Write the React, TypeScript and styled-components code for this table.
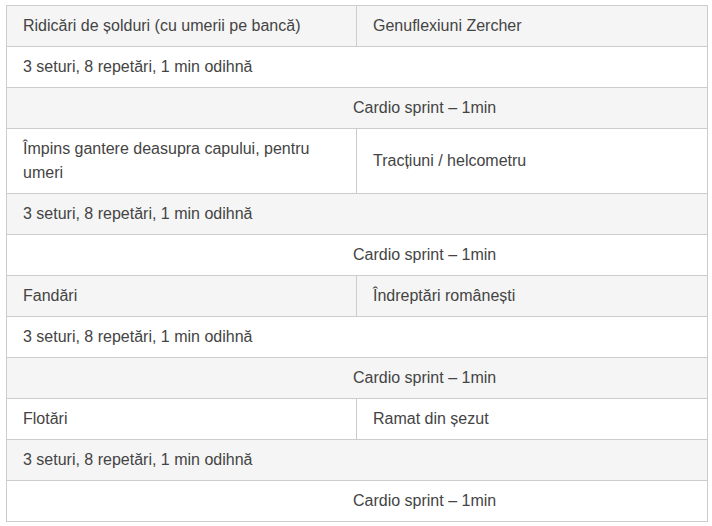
import React from "react";
import styled, { createGlobalStyle } from "styled-components";

const GlobalStyle = createGlobalStyle`
  html, body {
    margin: 0;
    padding: 0;
    background: #ffffff;
  }
  body {
    font-family: "Liberation Sans", Arial, sans-serif;
  }
`;

const Page = styled.div`
  padding: 5px 5px 0 6px;
`;

const Table = styled.table`
  width: 701px;
  border-collapse: collapse;
  table-layout: fixed;
  font-family: "Liberation Sans", Arial, sans-serif;
  font-size: 16px;
  line-height: 24px;
  color: #444444;
  border: 1px solid #cccccc;
`;

const Row = styled.tr<{ $shaded: boolean }>`
  background: ${(p) => (p.$shaded ? "#f5f5f5" : "#ffffff")};
`;

const Cell = styled.td<{ $indent?: number }>`
  border: 1px solid #cccccc;
  padding: 8px 16px 8px ${(p) => (p.$indent ?? 16)}px;
  vertical-align: middle;
  text-align: left;
`;

type Block = { left: string; right: string };

const blocks: Block[] = [
  { left: "Ridicări de șolduri (cu umerii pe bancă)", right: "Genuflexiuni Zercher" },
  { left: "Împins gantere deasupra capului, pentru umeri", right: "Tracțiuni / helcometru" },
  { left: "Fandări", right: "Îndreptări românești" },
  { left: "Flotări", right: "Ramat din șezut" },
];

export default function App() {
  let index = 0;
  return (
    <>
      <GlobalStyle />
      <Page>
        <Table>
          <colgroup>
            <col style={{ width: "350px" }} />
            <col style={{ width: "351px" }} />
          </colgroup>
          <tbody>
            {blocks.map((b, i) => {
              const rows = [
                <Row key={`${i}-a`} $shaded={index++ % 2 === 0}>
                  <Cell>{b.left}</Cell>
                  <Cell>{b.right}</Cell>
                </Row>,
                <Row key={`${i}-b`} $shaded={index++ % 2 === 0}>
                  <Cell colSpan={2}>3 seturi, 8 repetări, 1 min odihnă</Cell>
                </Row>,
                <Row key={`${i}-c`} $shaded={index++ % 2 === 0}>
                  <Cell colSpan={2} $indent={346}>
                    Cardio sprint – 1min
                  </Cell>
                </Row>,
              ];
              return rows;
            })}
          </tbody>
        </Table>
      </Page>
    </>
  );
}
